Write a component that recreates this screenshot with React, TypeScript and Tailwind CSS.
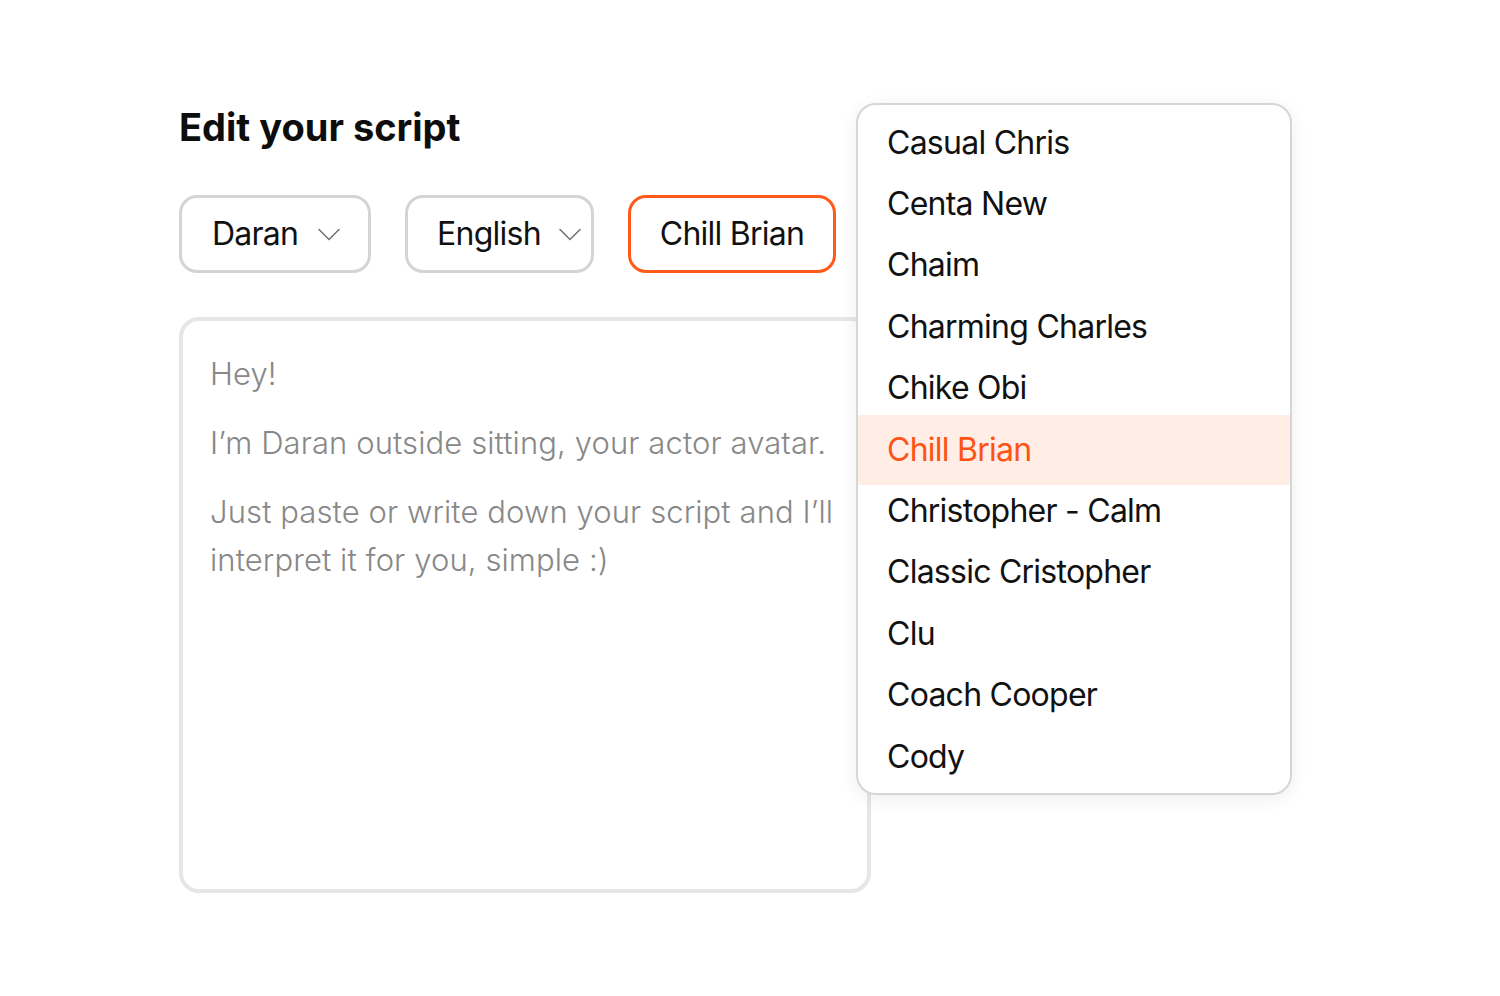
import React from 'react';

const voices = [
  'Casual Chris',
  'Centa New',
  'Chaim',
  'Charming Charles',
  'Chike Obi',
  'Chill Brian',
  'Christopher - Calm',
  'Classic Cristopher',
  'Clu',
  'Coach Cooper',
  'Cody',
];

const Chevron = () => (
  <svg width="22" height="13" viewBox="0 0 22 13" fill="none" className="shrink-0">
    <polyline points="1,1.5 11,11.5 21,1.5" stroke="#6f6f6f" strokeWidth="1.5" strokeLinecap="round" strokeLinejoin="miter" />
  </svg>
);

const App = () => {
  const selected = 'Chill Brian';

  return (
    <div className="relative w-full h-[996px] bg-white font-['Inter',sans-serif] overflow-hidden">
      <div className="pl-[179px] pt-[103px]">
        {/* Header */}
        <h1 className="text-[38px] leading-[48px] font-bold text-[#0d0d0d]">
          Edit your script
        </h1>

        {/* Selectors */}
        <div className="mt-[44px] flex gap-[34px]">
          <button className="w-[192px] h-[78px] flex items-center gap-[20px] pl-[30px] border-[3px] border-[#d4d4d4] rounded-[18px] bg-white">
            <span className="text-[32px] leading-none tracking-[-0.75px] text-[#111]">Daran</span>
            <Chevron />
          </button>
          <button className="w-[189px] h-[78px] flex items-center gap-[18px] pl-[29px] border-[3px] border-[#d4d4d4] rounded-[18px] bg-white">
            <span className="text-[32px] leading-none tracking-[-0.75px] text-[#111]">English</span>
            <Chevron />
          </button>
          <button className="w-[208px] h-[78px] flex items-center justify-center border-[3px] border-[#ff5a1a] rounded-[18px] bg-white">
            <span className="text-[32px] leading-none tracking-[-0.75px] text-[#111]">Chill Brian</span>
          </button>
        </div>

        {/* Script box */}
        <div className="mt-[44px] w-[692px] h-[576px] border-4 border-[#e6e6e6] rounded-[20px] px-[27px] pt-[29px]">
          <div className="space-y-[21px] text-[31px] leading-[48px] font-light tracking-[0.1px] text-[#888888]">
            <p>Hey!</p>
            <p>I’m Daran outside sitting, your actor avatar.</p>
            <p>Just paste or write down your script and I’ll interpret it for you, simple :)</p>
          </div>
        </div>
      </div>

      {/* Voice dropdown */}
      <div className="absolute left-[856px] top-[103px] w-[436px] h-[692px] bg-white border-2 border-[#d6d6d6] rounded-[20px] shadow-[0_4px_18px_rgba(0,0,0,0.07)] pt-[7px] pb-[5px]">
        {voices.map((v) =>
          v === selected ? (
            <div key={v} className="h-[70px] -my-[4.3px] flex items-center pl-[29px] bg-[#ffede6] text-[32px] leading-none tracking-[-0.75px] text-[#ff5314]">
              {v}
            </div>
          ) : (
            <div key={v} className="h-[61.4px] flex items-center pl-[29px] text-[32px] leading-none tracking-[-0.75px] text-[#111]">
              {v}
            </div>
          )
        )}
      </div>
    </div>
  );
};

export default App;
